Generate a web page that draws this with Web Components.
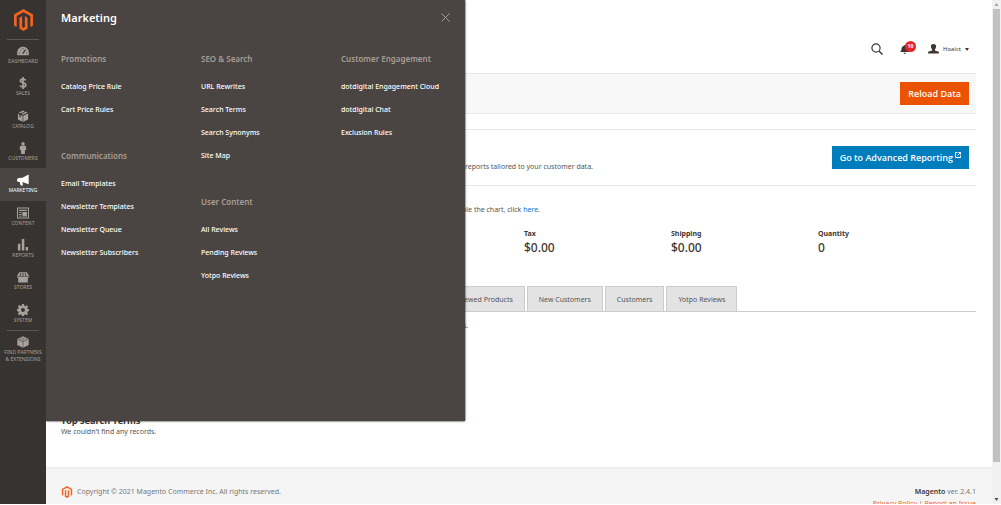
<!DOCTYPE html>
<html lang="en">
<head>
<meta charset="utf-8">
<title>Dashboard / Magento Admin</title>
<style>
  html, body { margin: 0; height: 100%; background: #fff; }
  body { font-family: "Noto Sans", "Open Sans", sans-serif; font-size: 7px; line-height: 12px; color: #555; overflow: hidden; }
</style>
</head>
<body>
<admin-shell>
  <side-nav slot="nav">
    <nav-item icon="dashboard">Dashboard</nav-item>
    <nav-item icon="sales">Sales</nav-item>
    <nav-item icon="box">Catalog</nav-item>
    <nav-item icon="person">Customers</nav-item>
    <nav-item icon="megaphone" active>Marketing</nav-item>
    <nav-item icon="content">Content</nav-item>
    <nav-item icon="reports">Reports</nav-item>
    <nav-item icon="stores">Stores</nav-item>
    <nav-item icon="gear">System</nav-item>
    <nav-item icon="brick" slot="extra">Find Partners<br>&amp; Extensions</nav-item>
  </side-nav>

  <mega-menu slot="menu" heading="Marketing">
    <div>
      <menu-group heading="Promotions" links="Catalog Price Rule|Cart Price Rules"></menu-group>
      <menu-group heading="Communications" links="Email Templates|Newsletter Templates|Newsletter Queue|Newsletter Subscribers"></menu-group>
    </div>
    <div>
      <menu-group heading="SEO &amp; Search" links="URL Rewrites|Search Terms|Search Synonyms|Site Map"></menu-group>
      <menu-group heading="User Content" links="All Reviews|Pending Reviews|Yotpo Reviews"></menu-group>
    </div>
    <div>
      <menu-group heading="Customer Engagement" links="dotdigital Engagement Cloud|dotdigital Chat|Exclusion Rules"></menu-group>
    </div>
  </mega-menu>

  <page-header user="Hoaict" count="10"></page-header>
  <page-toolbar><action-button tone="primary">Reload Data</action-button></page-toolbar>
  <reporting-banner>
    reports tailored to your customer data.
    <action-button slot="action" tone="blue" external>Go to Advanced Reporting</action-button>
  </reporting-banner>
  <dashboard-body>
    <search-terms slot="aside"></search-terms>
    <chart-notice></chart-notice>
    <stat-row>
      <stat-total label="Tax">$0.00</stat-total>
      <stat-total label="Shipping">$0.00</stat-total>
      <stat-total label="Quantity">0</stat-total>
    </stat-row>
    <tab-strip tabs="Most Viewed Products|New Customers|Customers|Yotpo Reviews">We couldn't find any records.</tab-strip>
  </dashboard-body>
  <page-footer></page-footer>

  <scroll-rail slot="rail"></scroll-rail>
</admin-shell>

<script>
const define = (name, render) => customElements.define(name, class extends HTMLElement {
  connectedCallback() {
    if (this.shadowRoot) return;
    this.attachShadow({ mode: 'open' }).innerHTML = render(this);
  }
});

const esc = s => s.replace(/&/g, '&amp;').replace(/</g, '&lt;');

const reset = `
  *, *::before { box-sizing: border-box; }
  h1, h2, h3, p, ul { margin: 0; padding: 0; font-weight: inherit; }
  ul { list-style: none; }
  a { color: inherit; text-decoration: none; }
  button { font: inherit; color: inherit; background: none; border: 0; padding: 0; margin: 0; cursor: pointer; }
  svg { display: block; }
`;

const icons = {
  dashboard: '<path d="M.5 17C-1 8 4 3 10 3s11 5 9.500 14z"/><g stroke="#373330" fill="none" stroke-width="1.300"><path d="M3 13l2 .3M5 8l1.500 1.200M10 5.200v2M17 13l-2 .3"/><path d="M9.500 14.500L14.500 7.500" stroke-width="2"/></g>',
  sales: '<path d="M14.500 5.500C13.800 4 12 3.400 10 3.400c-2.500 0-4.300 1-4.300 3C5.700 11 14.700 8.600 14.700 13.300c0 2.100-2 3.300-4.600 3.300-2.300 0-4.200-.8-4.900-2.500M10 0v20" fill="none" stroke="currentColor" stroke-width="2.800"/>',
  box: '<path d="M10 1l3 1.300-6.800 3.200L3 4.300zM14.500 3L17.500 4.300 10 7.800 7.600 6.500zM1.500 6L4 7.300v4l2 1.600V8.200l3.500 1.500V19.500l-8-3.800zM18.500 6v9.700l-8 3.800V9.700z"/>',
  person: '<circle cx="10" cy="2.800" r="2.800"/><path d="M7 6h6l2.300 2v5.500h-1.800L12.900 20H7.100l-.6-6.500H4.700V8z"/>',
  megaphone: '<path d="M19.500 1v16L10 13.800l-1-.3L10 19H6L4.500 13.200H3C.5 13.200 0 11.500 0 10s1-3.300 3-3.300l6-.3z"/>',
  content: '<path fill-rule="evenodd" d="M0 1h20v18H0zm1.700 1.700v14.600h16.600V2.700zM3.500 4.500h13v2.300h-13zM3.500 8.500h4v1.700h-4zM3.500 11.500h4v1.700h-4zM3.500 14.500h4v1.500h-4zM9 8.500h7.500V16H9z"/>',
  reports: '<path d="M1.500 8h4.200v11H1.500zM8 0h4.200v19H8zM14.500 13.500h4V19h-4z"/>',
  stores: '<path d="M3.500 2h13l3.500 6.500H0zM0 9h20c0 1.800-1 2.500-2 2.700V19H2v-7.300C1 11.500 0 10.800 0 9z"/><path d="M6.300 3.500L5 9M10 3.500V9M13.700 3.500L15 9" stroke="#373330" stroke-width="1.500"/>',
  gear: '<path fill-rule="evenodd" d="M8.300 0h3.400l.5 2.900 1.600.7 2.400-1.700 2.400 2.400-1.700 2.400.7 1.600 2.400.5v3l-2.400.7-.7 1.600 1.700 2.400-2.400 2.400-2.400-1.700-1.600.7-.5 2.100H8.300l-.5-2.100-1.600-.7-2.400 1.700-2.400-2.400 1.700-2.400-.7-1.600L0 11.700v-3l2.400-.6.7-1.600-1.700-2.400 2.400-2.300 2.400 1.700 1.600-.7zM10 6.700a3.300 3.300 0 100 6.600 3.300 3.300 0 000-6.600z"/>',
  brick: '<path d="M10 .5L19.500 5v10L10 19.500.5 15V5z"/><g stroke="#373330" fill="none" stroke-width=".8"><path d="M1 5.600l9 4.200 9-4.200M10 9.800V19"/><path d="M7 3.500l3 1.300 3-1.300M4 5l3 1.300M16 5l-3 1.300M8.500 6.800l1.500.7 1.500-.7" stroke-width=".8"/></g>'
};

const logo = `<svg viewBox="1.600 0 20.800 24" fill="#f26322" aria-hidden="true"><path d="M12 24l-4.455-2.572v-12l2.970-1.715v12.001l1.485.902 1.485-.902V7.713l2.971 1.715v12L12 24zM22.391 6v12l-2.969 1.714V7.713L12 3.430 4.574 7.713v12.001L1.609 18V6L12 0l10.391 6z"/></svg>`;

define('admin-shell', () => `<style>${reset}
  :host { display: grid; grid-template-columns: 46px 1fr 9px; height: calc(100vh - 1px); position: relative; overflow: hidden; }
  main { min-width: 0; min-height: 0; overflow: hidden; display: flex; flex-direction: column; }
  main ::slotted(*) { flex-shrink: 0; }
  </style>
  <slot name="nav"></slot><main><slot></slot></main><slot name="rail"></slot><slot name="menu"></slot>`);

define('side-nav', () => `<style>${reset}
  :host { display: block; background: #373330; color: #a6a19b; }
  .brand { display: flex; justify-content: center; height: 39px; padding-top: 9px; }
  .brand svg { width: 19px; height: 22px; }
  .list { display: grid; grid-template-rows: repeat(9, 1fr); height: 291px; position: relative; }
  hr { border: 0; height: 1px; background: #5c5752; margin: 0 7px -1px; position: relative; }
  </style>
  <nav aria-label="Main"><a class="brand" href="#" aria-label="Magento">${logo}</a><hr>
  <div class="list"><slot></slot></div><hr><slot name="extra"></slot></nav>`);

define('nav-item', el => `<style>${reset}
  :host { display: block; font-size: 5px; line-height: 7px; text-transform: uppercase; text-align: center; white-space: nowrap; }
  :host([active]) { background: #4a4542; color: #fff; }
  a { display: flex; flex-direction: column; align-items: center; gap: 1px; padding-top: 6px; }
  svg { width: 12px; height: 12px; }
  </style>
  <a href="#"><svg viewBox="0 0 20 20" fill="currentColor" aria-hidden="true">${icons[el.getAttribute('icon')]}</svg><span><slot></slot></span></a>`);

define('mega-menu', el => `<style>${reset}
  :host { display: block; position: absolute; left: 46px; top: 0; width: 419px; height: 421px; background: #4a4542; color: #fff; padding: 8px 15px; box-sizing: border-box; box-shadow: 0 0 2px #000; clip-path: inset(0 -3px -3px 0); }
  header { display: flex; justify-content: space-between; height: 43px; }
  h2 { font-size: 11px; line-height: 20px; font-weight: 600; }
  button { width: 9px; height: 18px; color: #a79d95; }
  .cols { display: grid; grid-template-columns: repeat(3, 140px); }
  </style>
  <header><h2>${el.getAttribute('heading')}</h2>
  <button aria-label="Close"><svg width="9" height="9" viewBox="0 0 9 9" fill="none" stroke="currentColor"><path d="M.5.5l8 8m0-8l-8 8"/></svg></button></header>
  <div class="cols"><slot></slot></div>`);

define('menu-group', el => `<style>${reset}
  :host { display: block; margin-bottom: 27px; white-space: nowrap; }
  h3 { font-size: 8px; line-height: 16px; font-weight: 600; color: #a79d95; margin-bottom: 8px; }
  li { line-height: 23px; font-weight: 500; }
  </style>
  <h3>${esc(el.getAttribute('heading'))}</h3>
  <ul>${el.getAttribute('links').split('|').map(t => `<li><a href="#">${t}</a></li>`).join('')}</ul>`);

define('page-header', el => `<style>${reset}
  :host { display: flex; justify-content: flex-end; align-items: center; gap: 17px; padding: 37px 23px 12px 15px; height: 73px; box-sizing: border-box; color: #41362f; }
  .bell { position: relative; width: 11px; }
  .badge { position: absolute; left: 5px; top: -4px; width: 11px; height: 11px; border-radius: 6px; background: #e22626; color: #fff; font-size: 5px; line-height: 11px; font-weight: 700; text-align: center; }
  .user { display: flex; align-items: center; gap: 4px; font-size: 6px; }
  </style>
  <button aria-label="Search"><svg width="12" height="12" viewBox="0 0 12 12" fill="none" stroke="currentColor"><circle cx="5" cy="5" r="4.100" stroke-width="1.200"/><path d="M8 8l3.500 3.500" stroke-width="1.500"/></svg></button>
  <button class="bell" aria-label="Notifications"><svg width="10" height="9" viewBox="0 0 20 18" fill="currentColor"><path d="M0 14c3-2 2.500-5 3.500-8.500C4.300 3 6 2 8 1.500c0-2 3-2 3 0 2 .5 3.500 1.500 4.500 4C16.500 9 16 12 19 14zM7 15.500h5c0 3-5 3-5 0z"/></svg><span class="badge">${el.getAttribute('count')}</span></button>
  <button class="user"><svg width="11" height="10" viewBox="0 0 20 20" preserveAspectRatio="none" fill="currentColor"><path d="M10 0c3.500 0 5 2.500 4.700 5.500-.3 2.500-1 4-2.200 5.300v2l6 2c1 .4 1.500 1.200 1.500 4.200H0c0-3 .5-3.800 1.500-4.200l6-2v-2C6.300 9.500 5.600 8 5.300 5.500 5 2.500 6.500 0 10 0z"/></svg>
  <span>${el.getAttribute('user')}</span><svg width="4" height="3" viewBox="0 0 4 3" fill="currentColor"><path d="M0 0h4L2 3z"/></svg></button>`);

define('page-toolbar', () => `<style>${reset}
  :host { display: flex; justify-content: flex-end; margin: 0 16px 15px 15px; padding: 8px 7px; background: #f8f8f8; border: solid #e8e8e8; border-width: 1px 0; }
  </style><slot></slot>`);

define('action-button', el => `<style>${reset}
  :host { display: block; flex: none; }
  button { display: flex; gap: 2px; padding: 0 8px; font-family: "Open Sans", "Noto Sans", sans-serif; font-size: 9px; line-height: 23px; font-weight: 600; color: #fff; background: #eb5202; }
  :host([tone=blue]) button { background: #007dbd; }
  svg { margin-top: 6px; }
  </style>
  <button><slot></slot>${el.hasAttribute('external') ? '<svg width="6" height="6" viewBox="0 0 6 6" fill="none" stroke="currentColor"><path d="M2.500.5h-2v5h5v-2M3.500.5h2v2M5.500.5l-3 3"/></svg>' : ''}</button>`);

define('reporting-banner', () => `<style>${reset}
  :host { display: flex; justify-content: space-between; margin: 0 16px 0 15px; padding: 16px 7px 12px 404px; border: solid #e8e8e8; border-width: 1px 0; }
  p { padding-top: 15px; white-space: nowrap; }
  </style>
  <p><slot></slot></p><slot name="action"></slot>`);

define('dashboard-body', () => `<style>${reset}
  :host { display: grid; grid-template-columns: 312px 1fr; margin: 0 16px 29px 15px; height: 252px; }
  .main { padding-top: 18px; min-width: 0; }
  .side { display: flex; flex-direction: column; justify-content: flex-end; }
  </style>
  <div class="side"><slot name="aside"></slot></div><div class="main"><slot></slot></div>`);

define('search-terms', () => `<style>${reset}
  :host { display: block; }
  h2 { font-family: "Open Sans", "Noto Sans", sans-serif; font-size: 9px; line-height: 10px; font-weight: 700; color: #41362f; }
  </style><h2>Top Search Terms</h2><p>We couldn't find any records.</p>`);

define('chart-notice', () => `<style>${reset}
  :host { display: block; margin-bottom: 12px; padding-left: 9px; }
  p a { color: #007bdb; }
  </style><p>Chart is disabled. To enable the chart, click <a href="#">here</a>.</p>`);

define('stat-row', () => `<style>${reset}
  :host { display: grid; grid-template-columns: repeat(3, 147px); padding-left: 151px; margin-bottom: 31px; color: #41362f; }
  </style><slot></slot>`);

define('stat-total', el => `<style>${reset}
  :host { display: block; }
  h3 { font-weight: 700; font-size: 7px; line-height: 12px; }
  p { font-size: 12px; line-height: 15px; font-weight: 500; }
  </style><h3>${el.getAttribute('label')}</h3><p><slot></slot></p>`);

define('tab-strip', el => `<style>${reset}
  :host { display: block; }
  .tabs { display: flex; gap: 2px; border-bottom: 1px solid #ccc; margin-bottom: 8px; padding-left: 55px; }
  button { padding: 1px 11px 0; line-height: 23px; background: #e3e3e3; border: 1px solid #ccc; border-bottom: 0; white-space: nowrap; }
  </style>
  <div class="tabs" role="tablist">${el.getAttribute('tabs').split('|').map(t => `<button role="tab">${t}</button>`).join('')}</div>
  <p role="tabpanel"><slot></slot></p>`);

define('page-footer', () => `<style>${reset}
  :host { display: block; flex: 1 0 auto; background: #f5f5f5; border-top: 2px solid #eee; color: #777; }
  footer { display: flex; justify-content: space-between; padding: 17px 16px 0 15px; }
  .left { display: flex; align-items: center; gap: 4px; height: 12px; }
  .left svg { width: 12px; height: 12px; }
  .right { text-align: right; }
  b { font-weight: 600; color: #41362f; }
  .links a { color: #ef672f; }
  </style>
  <footer><p class="left">${logo}<span>Copyright © 2021 Magento Commerce Inc. All rights reserved.</span></p>
  <div class="right"><p><b>Magento</b> ver. 2.4.1</p><p class="links"><a href="#">Privacy Policy</a> | <a href="#">Report an Issue</a></p></div></footer>`);

define('scroll-rail', () => `<style>${reset}
  :host { display: flex; flex-direction: column; align-items: center; background: #f1f1f1; }
  .thumb { width: 7px; flex: 453; background: #c1c1c1; }
  .rest { flex: 33; }
  svg { width: 9px; height: 9px; }
  </style>
  <svg viewBox="0 0 9 9" fill="#a3a3a3"><path d="M2.500 6h4l-2-3z"/></svg>
  <div class="thumb"></div><div class="rest"></div>
  <svg viewBox="0 0 9 9" fill="#505050"><path d="M2.500 3h4l-2 3z"/></svg>`);
</script>
</body>
</html>
